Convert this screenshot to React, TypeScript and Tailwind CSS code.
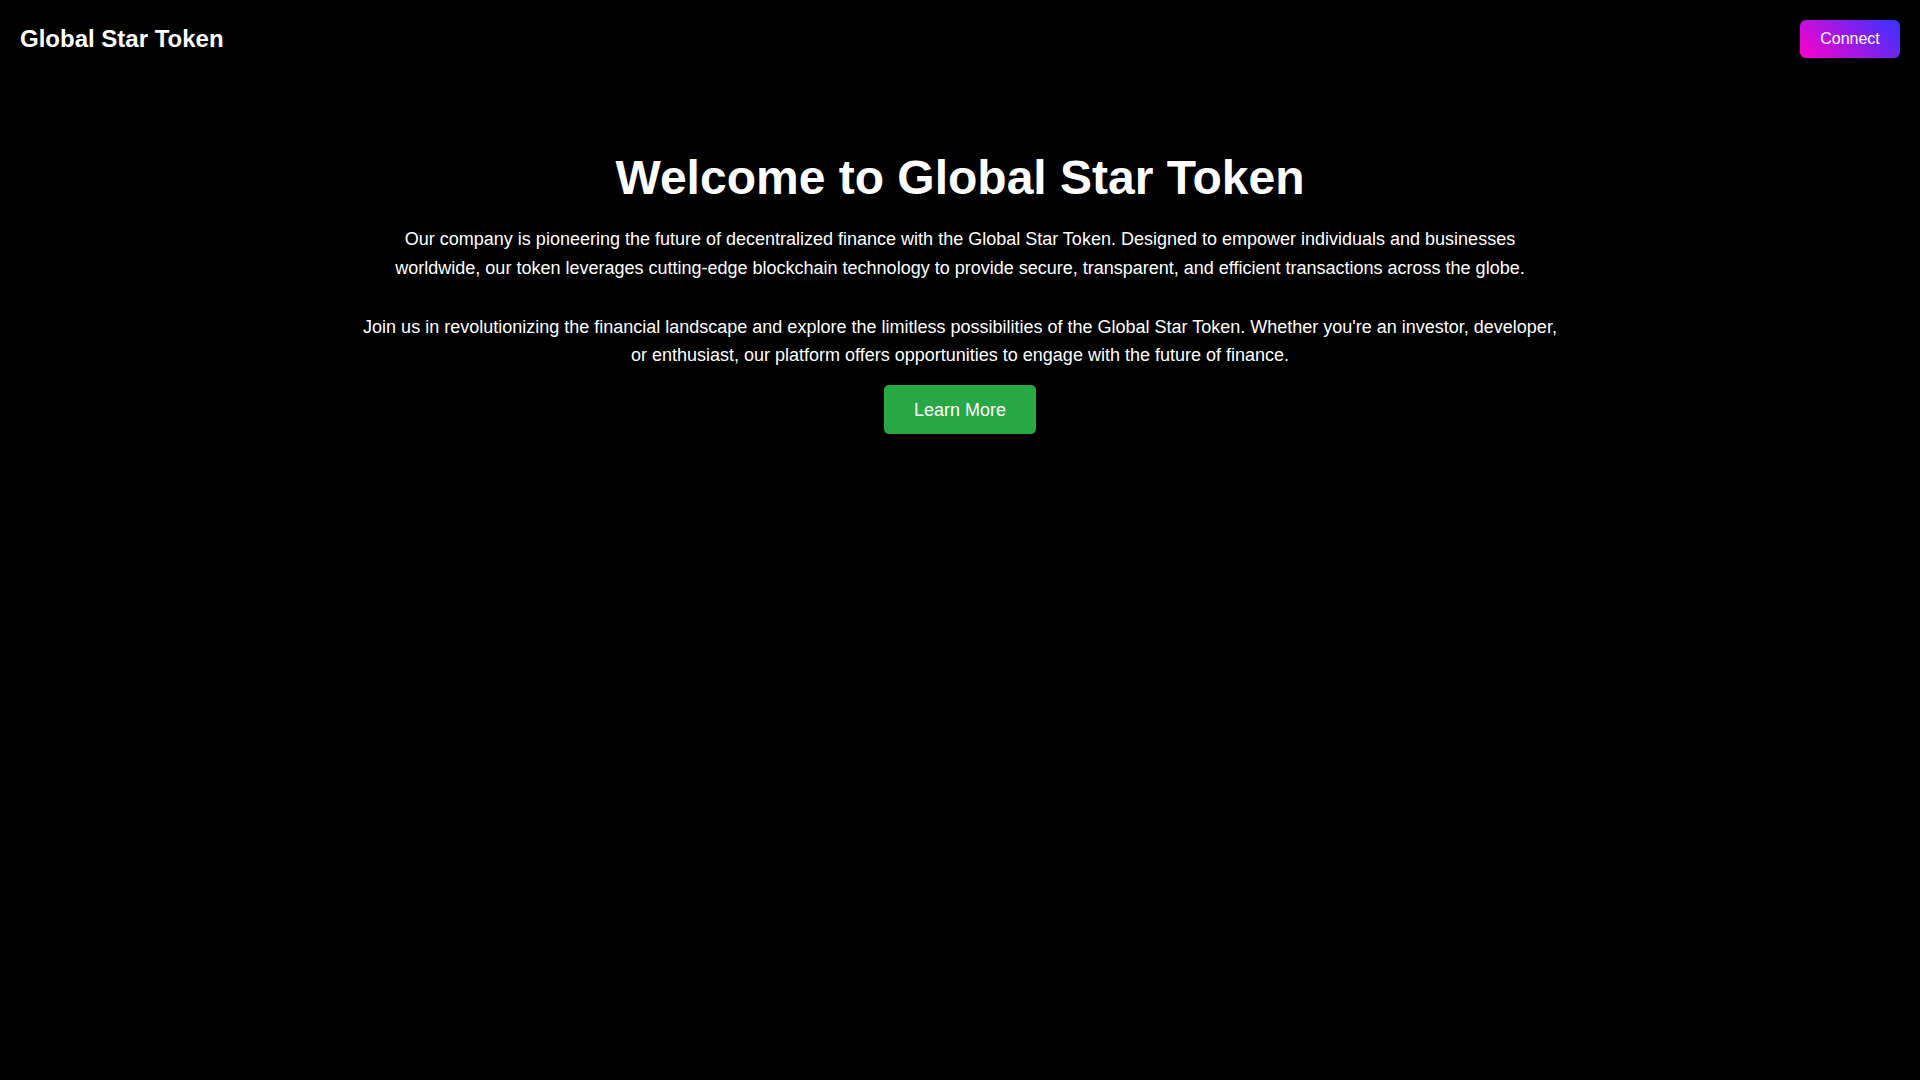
const App = () => {
  return (
    <div className="min-h-screen bg-black text-white font-['Liberation_Sans',Arial,sans-serif]">
      <header className="flex items-center justify-between px-5 py-5">
        <h1 className="text-2xl font-bold leading-[38px]">Global Star Token</h1>
        <button className="w-[100px] h-[38px] rounded-md bg-[linear-gradient(45deg,#ff00cc,#3333ff)] text-base text-white">
          Connect
        </button>
      </header>

      <main className="flex flex-col items-center text-center pt-[76px]">
        <h2 className="text-5xl font-bold leading-none">Welcome to Global Star Token</h2>
        <div className="max-w-[1196px] mt-[23px] text-lg leading-[1.6]">
          <p>
            Our company is pioneering the future of decentralized finance with the Global Star Token. Designed to
            empower individuals and businesses worldwide, our token leverages cutting-edge blockchain technology to
            provide secure, transparent, and efficient transactions across the globe.
          </p>
          <p className="mt-[30px]">
            Join us in revolutionizing the financial landscape and explore the limitless possibilities of the Global
            Star Token. Whether you're an investor, developer, or enthusiast, our platform offers opportunities to
            engage with the future of finance.
          </p>
        </div>
        <button className="mt-[15px] h-[49px] px-[30px] rounded-[5px] bg-[#28a745] text-lg text-white">
          Learn More
        </button>
      </main>
    </div>
  )
}

export default App
